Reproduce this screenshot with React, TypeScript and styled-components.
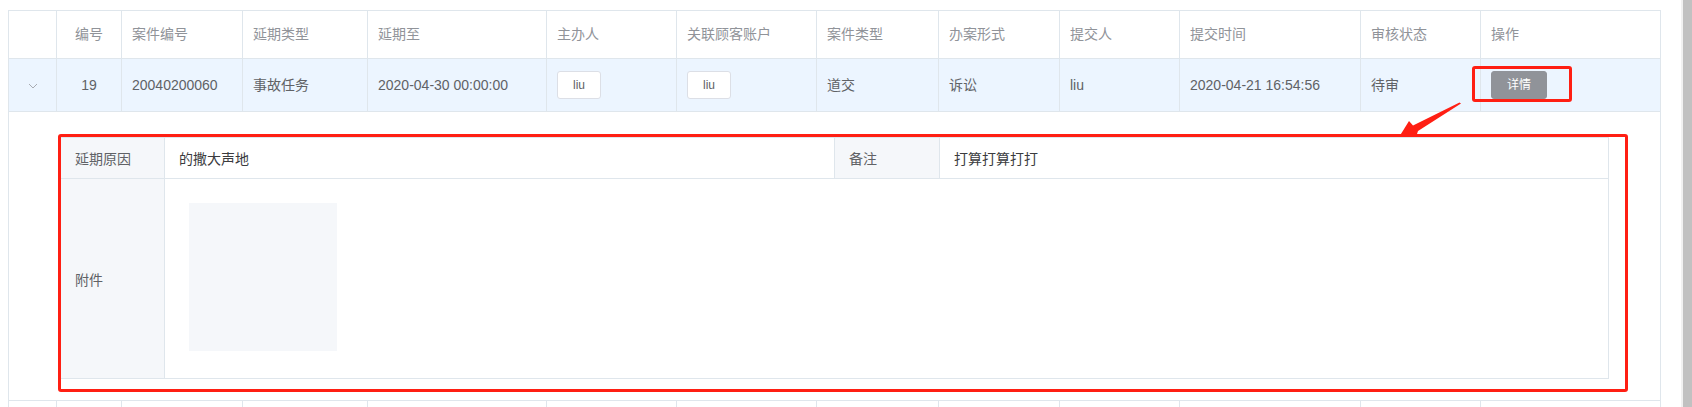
import React from 'react';
import styled, { createGlobalStyle, css } from 'styled-components';

const GlobalStyle = createGlobalStyle`
  html, body {
    margin: 0;
    padding: 0;
    background: #fff;
  }
  body {
    font-family: "Liberation Sans", "Noto Sans CJK SC", sans-serif;
    font-size: 14px;
    color: #606266;
  }
`;

const COLUMNS = '48px 65px 121px 125px 179px 130px 140px 122px 121px 120px 181px 120px 180px';
const LINE = '#dfe6ec';
const MARK = '#ff1f13';

const Frame = styled.div`
  display: flex;
  width: 1692px;
  height: 407px;
  overflow: hidden;
`;

const Page = styled.div`
  position: relative;
  flex: 1;
  padding: 10px 0 0 8px;
`;

const Scrollbar = styled.div`
  width: 9px;
  border-left: 2px solid #f1f1f1;
  background: #c1c1c1;
`;

const Table = styled.div`
  width: 1653px;
  border-left: 1px solid ${LINE};
  border-top: 1px solid ${LINE};
  box-sizing: border-box;
`;

const Row = styled.div<{ $active?: boolean }>`
  display: grid;
  grid-template-columns: ${COLUMNS};
  background: ${(p) => (p.$active ? '#ecf5ff' : '#fff')};
`;

const Cell = styled.div<{ $center?: boolean; $head?: boolean }>`
  box-sizing: border-box;
  display: flex;
  align-items: center;
  justify-content: ${(p) => (p.$center ? 'center' : 'flex-start')};
  padding: 12px 10px;
  line-height: 23px;
  border-right: 1px solid ${LINE};
  border-bottom: 1px solid ${LINE};
  white-space: nowrap;
  color: ${(p) => (p.$head ? '#909399' : '#606266')};
  ${(p) => !p.$head && css`
    min-height: 53px;
  `}
`;

const ExpandCell = styled.div`
  box-sizing: border-box;
  padding: 25px 51px 21px 51px;
  border-right: 1px solid ${LINE};
  border-bottom: 1px solid ${LINE};
  background: #fff;
`;

const Chevron = styled.svg`
  width: 10px;
  height: 6px;
  margin-top: 2px;
`;

const MiniButton = styled.button<{ $info?: boolean }>`
  box-sizing: border-box;
  height: 28px;
  padding: 0 15px;
  border-radius: 3px;
  font-family: inherit;
  font-size: 12px;
  line-height: 26px;
  border: 1px solid ${(p) => (p.$info ? '#909399' : '#dcdfe6')};
  background: ${(p) => (p.$info ? '#909399' : '#fff')};
  color: ${(p) => (p.$info ? '#fff' : '#606266')};
  cursor: pointer;
`;

const Detail = styled.div`
  display: grid;
  grid-template-columns: 104px 670px 105px 669px;
  grid-template-rows: 41px 200px;
  border-left: 1px solid ${LINE};
  border-top: 1px solid ${LINE};
`;

const DetailCell = styled.div<{ $label?: boolean; $span?: number }>`
  box-sizing: border-box;
  display: flex;
  align-items: center;
  padding: 0 14px;
  border-right: 1px solid ${LINE};
  border-bottom: 1px solid ${LINE};
  background: ${(p) => (p.$label ? '#f5f7fa' : '#fff')};
  color: ${(p) => (p.$label ? '#606266' : '#3a3b3e')};
  ${(p) => p.$span && css`
    grid-column: span ${p.$span};
  `}
`;

const AttachCell = styled(DetailCell)`
  align-items: flex-start;
  padding: 24px;
`;

const Thumb = styled.div`
  width: 148px;
  height: 148px;
  background: #f5f7fa;
`;

const MarkBox = styled.div<{ $left: number; $top: number; $w: number; $h: number }>`
  position: absolute;
  left: ${(p) => p.$left}px;
  top: ${(p) => p.$top}px;
  width: ${(p) => p.$w}px;
  height: ${(p) => p.$h}px;
  box-sizing: border-box;
  border: 3px solid ${MARK};
  border-radius: 3px;
  pointer-events: none;
`;

const Arrow = styled.svg`
  position: absolute;
  left: 1395px;
  top: 100px;
  width: 70px;
  height: 40px;
  pointer-events: none;
`;

const headers = ['', '编号', '案件编号', '延期类型', '延期至', '主办人', '关联顾客账户', '案件类型', '办案形式', '提交人', '提交时间', '审核状态', '操作'];

const record = {
  id: '19',
  no: '20040200060',
  type: '事故任务',
  until: '2020-04-30 00:00:00',
  host: 'liu',
  client: 'liu',
  caseType: '道交',
  form: '诉讼',
  by: 'liu',
  at: '2020-04-21 16:54:56',
  status: '待审',
};

function ExpandIcon() {
  return (
    <Chevron viewBox="0 0 10 6">
      <polyline points="1,1 5,5 9,1" fill="none" stroke="#a8abb2" strokeWidth="1" />
    </Chevron>
  );
}

export default function App() {
  return (
    <Frame>
      <GlobalStyle />
      <Page>
        <Table>
          <Row>
            {headers.map((h, i) => (
              <Cell key={i} $head $center={i === 1}>{h}</Cell>
            ))}
          </Row>
          <Row $active>
            <Cell $center><ExpandIcon /></Cell>
            <Cell $center>{record.id}</Cell>
            <Cell>{record.no}</Cell>
            <Cell>{record.type}</Cell>
            <Cell>{record.until}</Cell>
            <Cell><MiniButton>{record.host}</MiniButton></Cell>
            <Cell><MiniButton>{record.client}</MiniButton></Cell>
            <Cell>{record.caseType}</Cell>
            <Cell>{record.form}</Cell>
            <Cell>{record.by}</Cell>
            <Cell>{record.at}</Cell>
            <Cell>{record.status}</Cell>
            <Cell><MiniButton $info>详情</MiniButton></Cell>
          </Row>
          <ExpandCell>
            <Detail>
              <DetailCell $label>延期原因</DetailCell>
              <DetailCell>的撒大声地</DetailCell>
              <DetailCell $label>备注</DetailCell>
              <DetailCell>打算打算打打</DetailCell>
              <DetailCell $label>附件</DetailCell>
              <AttachCell $span={3}><Thumb /></AttachCell>
            </Detail>
          </ExpandCell>
          {/* next record, below the fold */}
          <Row>
            {headers.map((_, i) => (
              <Cell key={i} />
            ))}
          </Row>
        </Table>

        <MarkBox $left={1472} $top={66} $w={100} $h={36} />
        <MarkBox $left={58} $top={134} $w={1570} $h={258} />
        <Arrow viewBox="0 0 70 40">
          <polygon points="66,3.5 23,31 22,34 5,35.5 14,21 18,25.5 64.5,2.5" fill={MARK} />
        </Arrow>
      </Page>
      <Scrollbar />
    </Frame>
  );
}
